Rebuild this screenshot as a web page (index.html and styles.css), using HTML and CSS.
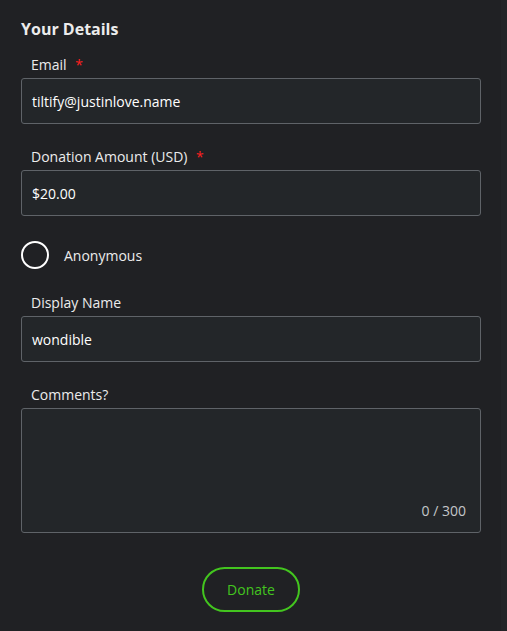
FILE: index.html
```html
<!DOCTYPE html>
<html>
<head>
<meta charset="utf-8">
<link rel="stylesheet" href="styles.css">
</head>
<body>
<div class="page">
  <form class="details">
    <h2 class="title">Your Details</h2>
    <div class="field">
      <label class="label">Email <span class="req">*</span></label>
      <div class="input">tiltify@justinlove.name</div>
    </div>
    <div class="field">
      <label class="label">Donation Amount (USD) <span class="req">*</span></label>
      <div class="input">$20.00</div>
    </div>
    <div class="radio-row">
      <span class="radio"></span>
      <span class="radio-label">Anonymous</span>
    </div>
    <div class="field">
      <label class="label">Display Name</label>
      <div class="input">wondible</div>
    </div>
    <div class="field">
      <label class="label">Comments?</label>
      <div class="textarea"><span class="counter">0 / 300</span></div>
    </div>
    <div class="actions">
      <button type="button" class="donate">Donate</button>
    </div>
  </form>
  <div class="edge"></div>
</div>
</body>
</html>
```
FILE: styles.css
```css
html, body {
  margin: 0;
  padding: 0;
  background: #202124;
  height: 100%;
}
.page {
  display: flex;
  min-height: 631px;
  font-family: "Open Sans", "Noto Sans", sans-serif;
  color: #e8eaed;
}
.details {
  width: 460px;
  padding: 18px 0 0 21px;
  display: flex;
  flex-direction: column;
}
.edge {
  margin-left: auto;
  width: 6px;
  background: #232528;
}
.title {
  margin: 0 0 15px;
  font-size: 16px;
  line-height: 22px;
  font-weight: 700;
  color: #ececec;
}
.field {
  display: flex;
  flex-direction: column;
  margin-bottom: 23px;
}
.label {
  padding-left: 10px;
  font-size: 14px;
  line-height: 20px;
  margin-bottom: 3px;
  color: #ececec;
}
.req {
  color: #ff1f1f;
  margin-left: 5px;
}
.input {
  height: 44px;
  border: 1px solid #5f6368;
  border-radius: 3px;
  background: #232629;
  padding: 0 10px;
  display: flex;
  align-items: center;
  font-size: 14px;
  color: #ffffff;
}
.radio-row {
  display: flex;
  align-items: center;
  gap: 15px;
  margin: 2px 0 24px;
}
.radio {
  width: 24px;
  height: 24px;
  border: 2.5px solid #ffffff;
  border-radius: 50%;
}
.radio-label {
  font-size: 14px;
  color: #ececec;
}
.textarea {
  height: 125px;
  box-sizing: border-box;
  border: 1px solid #5f6368;
  border-radius: 3px;
  background: #232629;
  display: flex;
  justify-content: flex-end;
  align-items: flex-end;
  padding: 0 14px 12px 0;
}
.counter {
  font-size: 14px;
  color: #c4c7ca;
}
.actions {
  display: flex;
  justify-content: center;
  margin-top: 11px;
}
.donate {
  width: 98px;
  height: 45px;
  border: 2px solid #43c51f;
  border-radius: 23px;
  background: transparent;
  color: #43c51f;
  font-family: "Open Sans", "Noto Sans", sans-serif;
  font-size: 14px;
  font-weight: 500;
  cursor: pointer;
}
```
